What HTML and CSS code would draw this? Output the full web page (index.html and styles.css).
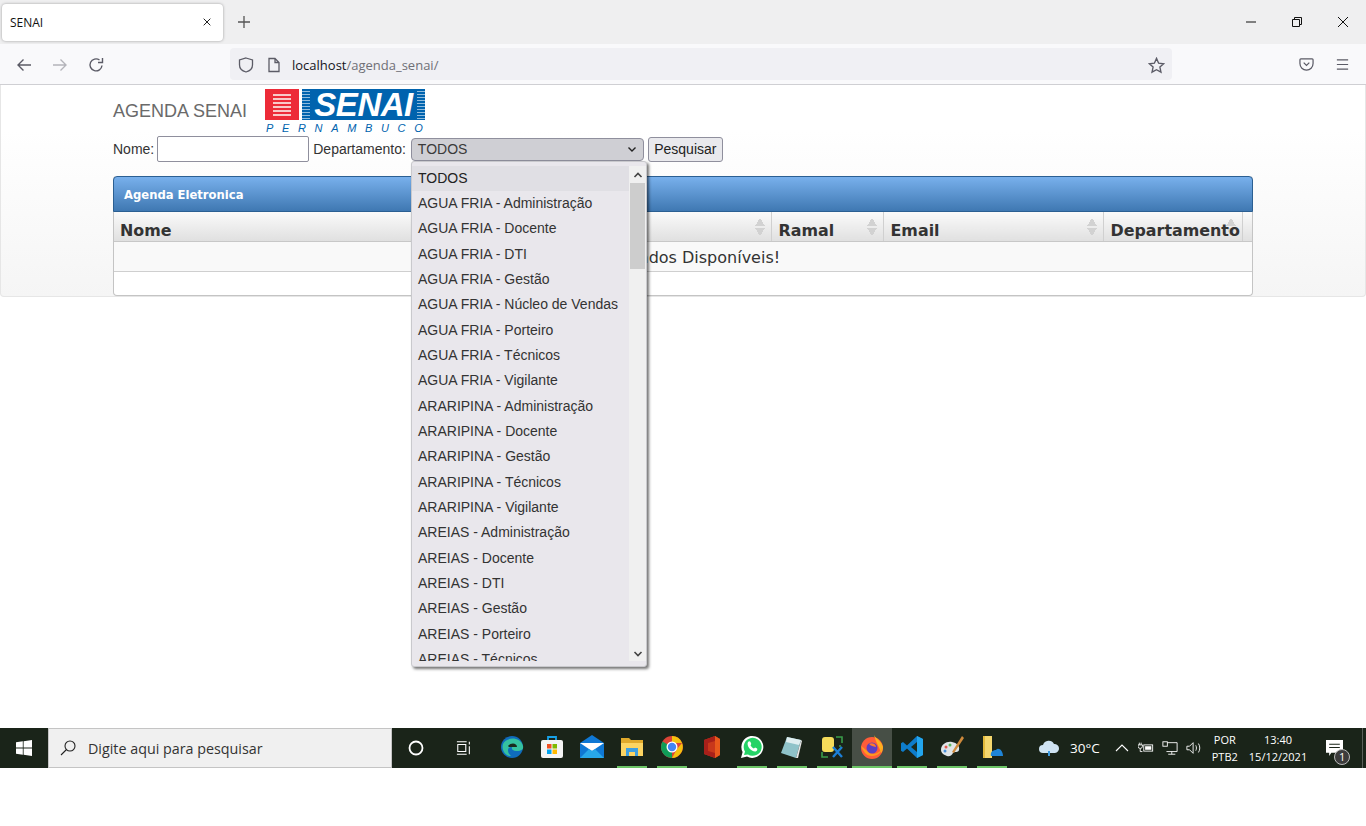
FILE: index.html
```html
<!DOCTYPE html>
<html lang="pt-BR">
<head>
    <meta charset="UTF-8">
    <title>SENAI</title>
    <link rel="stylesheet" href="styles.css">
</head>
<body>
    <!-- tab strip -->
    <div class="tabbar">
        <div class="tab">
            <span class="tab-title">SENAI</span>
            <svg class="icon12" viewBox="0 0 12 12"><path d="M2 2l8 8M10 2l-8 8" stroke="#222" stroke-width="1.2" fill="none"/></svg>
        </div>
        <svg class="newtab" viewBox="0 0 14 14"><path d="M7 1v12M1 7h12" stroke="#555" stroke-width="1.3" fill="none"/></svg>
        <div class="winbtns">
            <svg viewBox="0 0 12 12"><path d="M1 6h10" stroke="#111" stroke-width="1"/></svg>
            <svg viewBox="0 0 12 12"><path d="M1.5 3.5h7v7h-7zM3.5 3.5v-2h7v7h-2" stroke="#111" stroke-width="1" fill="none"/></svg>
            <svg viewBox="0 0 12 12"><path d="M1 1l10 10M11 1L1 11" stroke="#111" stroke-width="1" fill="none"/></svg>
        </div>
    </div>

    <!-- nav bar -->
    <div class="toolbar">
        <div class="navbtns">
            <svg viewBox="0 0 16 16"><path d="M15 8H2M7.5 2.5L2 8l5.5 5.5" stroke="#5b5b66" stroke-width="1.4" fill="none"/></svg>
            <svg viewBox="0 0 16 16"><path d="M1 8h13M8.5 2.5L14 8l-5.5 5.5" stroke="#b4b4ba" stroke-width="1.4" fill="none"/></svg>
            <svg viewBox="0 0 16 16"><path d="M14 8.5A6 6 0 1 1 11.5 3M14.5 1v4.500h-4.500" stroke="#5b5b66" stroke-width="1.400" fill="none"/></svg>
        </div>
        <div class="urlbar">
            <svg class="icon16" viewBox="0 0 16 16"><path d="M8 1l6.500 2v5c0 3.500-3 6-6.500 7-3.500-1-6.500-3.500-6.500-7V3z" stroke="#5b5b66" stroke-width="1.300" fill="none"/></svg>
            <svg class="icon14" viewBox="0 0 14 16"><path d="M2 1.500h6l4 4V14.500H2zM8 1.500v4h4" stroke="#5b5b66" stroke-width="1.300" fill="none"/></svg>
            <span class="url"><span class="url-host">localhost</span>/agenda_senai/</span>
            <svg class="star" viewBox="0 0 16 16"><path d="M8 1.300l2 4.500 4.800.500-3.600 3.200 1 4.800L8 12l-4.200 2.300 1-4.800L1.200 6.300 6 5.800z" stroke="#5b5b66" stroke-width="1.300" fill="none"/></svg>
        </div>
        <div class="toolbtns">
            <svg viewBox="0 0 16 16"><path d="M2 2h12a1 1 0 0 1 1 1v4a7 7 0 0 1-14 0V3a1 1 0 0 1 1-1z" stroke="#5b5b66" stroke-width="1.300" fill="none"/><path d="M5 6l3 3 3-3" stroke="#5b5b66" stroke-width="1.300" fill="none"/></svg>
            <svg viewBox="0 0 16 16"><path d="M2 3h12M2 8h12M2 13h12" stroke="#5b5b66" stroke-width="1.300" fill="none"/></svg>
        </div>
    </div>

    <div class="page">
        <div class="panel">
            <div class="brand">
                <h1 class="brand-title">AGENDA SENAI</h1>
                <div class="logo">
                    <div class="logo-top">
                        <div class="logo-red">
                            <span></span><span></span><span></span><span></span><span></span><span></span>
                        </div>
                        <div class="logo-blue">SENAI</div>
                    </div>
                    <div class="logo-sub">PERNAMBUCO</div>
                </div>
            </div>

            <form class="search">
                <label>Nome:</label>
                <input type="text" class="field">
                <label>Departamento:</label>
                <div class="select">
                    <span>TODOS</span>
                    <svg viewBox="0 0 10 10"><path d="M1.500 3.500L5 7l3.500-3.500" stroke="#222" stroke-width="1.400" fill="none"/></svg>
                </div>
                <button type="button" class="btn">Pesquisar</button>
            </form>

            <div class="grid-box">
                <div class="grid-title">Agenda Eletronica</div>
                <table class="grid">
                    <thead>
                        <tr>
                            <th class="col-nome">Nome<i class="sort"></i></th>
                            <th class="col-ramal">Ramal<i class="sort"></i></th>
                            <th class="col-email">Email<i class="sort"></i></th>
                            <th class="col-depto">Departamento<i class="sort"></i></th>
                            <th></th>
                        </tr>
                    </thead>
                    <tbody>
                        <tr><td colspan="5">Sem Dados Disponíveis!</td></tr>
                    </tbody>
                </table>
                <div class="grid-foot"></div>
            </div>

            <!-- open select list -->
            <div class="dropdown">
                <ul class="options">
                    <li class="active">TODOS</li>
                    <li>AGUA FRIA - Administração</li>
                    <li>AGUA FRIA - Docente</li>
                    <li>AGUA FRIA - DTI</li>
                    <li>AGUA FRIA - Gestão</li>
                    <li>AGUA FRIA - Núcleo de Vendas</li>
                    <li>AGUA FRIA - Porteiro</li>
                    <li>AGUA FRIA - Técnicos</li>
                    <li>AGUA FRIA - Vigilante</li>
                    <li>ARARIPINA - Administração</li>
                    <li>ARARIPINA - Docente</li>
                    <li>ARARIPINA - Gestão</li>
                    <li>ARARIPINA - Técnicos</li>
                    <li>ARARIPINA - Vigilante</li>
                    <li>AREIAS - Administração</li>
                    <li>AREIAS - Docente</li>
                    <li>AREIAS - DTI</li>
                    <li>AREIAS - Gestão</li>
                    <li>AREIAS - Porteiro</li>
                    <li>AREIAS - Técnicos</li>
                </ul>
                <div class="scrollbar">
                    <svg viewBox="0 0 10 6"><path d="M1.500 5L5 1.500 8.500 5" stroke="#444" stroke-width="1.600" fill="none"/></svg>
                    <div class="track"><div class="thumb"></div></div>
                    <svg viewBox="0 0 10 6"><path d="M1.500 1L5 4.500 8.500 1" stroke="#444" stroke-width="1.600" fill="none"/></svg>
                </div>
            </div>
        </div>
    </div>

    <!-- windows taskbar -->
    <div class="taskbar">
        <div class="start">
            <svg viewBox="0 0 16 16"><path d="M0 2.300l6.800-1v6.300H0zM7.600 1.200L16 0v7.600H7.600zM0 8.400h6.800v6.300l-6.800-1zM7.600 8.400H16V16l-8.400-1.200z" fill="#fff"/></svg>
        </div>
        <div class="tb-search">
            <svg viewBox="0 0 16 16"><circle cx="10" cy="6" r="5" stroke="#222" stroke-width="1.100" fill="none"/><path d="M6.500 9.500L1 15" stroke="#222" stroke-width="1.100"/></svg>
            <span>Digite aqui para pesquisar</span>
        </div>
        <div class="tb-sys">
            <svg viewBox="0 0 16 16"><circle cx="8" cy="8" r="6.500" stroke="#fff" stroke-width="1.800" fill="none"/></svg>
            <svg viewBox="0 0 18 16"><path d="M1 1h11M1 15h11M2 4h9v8H2zM15 1v3M15 6v9" stroke="#fff" stroke-width="1.200" fill="none"/></svg>
        </div>
        <div class="apps">
            <div class="app"><svg viewBox="0 0 24 24"><circle cx="12" cy="12" r="11" fill="#0f6cbd"/><path d="M3 9c3-7 17-8 20 2 1 4-3 5-7 5-3 0-5-2-4-4-4-1-6 5-1 9-5 1-10-6-8-12z" fill="#35c1a0"/><path d="M8 11c3-4 9-3 9 1H9z" fill="#1a2a1e"/></svg></div>
            <div class="app"><svg viewBox="0 0 24 24"><path d="M8 5V2h8v3" stroke="#17a2e8" stroke-width="1.800" fill="none"/><rect x="1" y="5" width="22" height="18" rx="2" fill="#f4f4f4"/><rect x="7" y="9" width="4.500" height="4.500" fill="#f25022"/><rect x="12.500" y="9" width="4.500" height="4.500" fill="#7fba00"/><rect x="7" y="14.500" width="4.500" height="4.500" fill="#00a4ef"/><rect x="12.500" y="14.500" width="4.500" height="4.500" fill="#ffb900"/></svg></div>
            <div class="app"><svg viewBox="0 0 24 24"><path d="M0 8L12 0l12 8v15H0z" fill="#0f78d4"/><path d="M0 8h24L12 16z" fill="#fff"/><path d="M0 23l9-9 3 2 3-2 9 9z" fill="#28a8ea"/></svg></div>
            <div class="app running"><svg viewBox="0 0 24 24"><path d="M1 3h8l2 2h12v16H1z" fill="#e0a92b"/><path d="M1 8h22v13H1z" fill="#fcd462"/><path d="M6 21v-8h12v8h-3v-4H9v4z" fill="#3f9fe0"/></svg></div>
            <div class="app running"><svg viewBox="0 0 24 24"><circle cx="12" cy="12" r="11" fill="#db4437"/><path d="M12 12L2.500 6.500A11 11 0 0 0 12 23z" fill="#0f9d58"/><path d="M12 1a11 11 0 0 1 10 7H12zM22 8a11 11 0 0 1-10 15l5-9z" fill="#f4c20d"/><circle cx="12" cy="12" r="5.500" fill="#fff"/><circle cx="12" cy="12" r="4.200" fill="#4285f4"/></svg></div>
            <div class="app"><svg viewBox="0 0 24 24"><path d="M4 5l11-4 5 3v16l-5 3-11-4z" fill="#c8371b"/><path d="M4 5l11-4v5L8 8v8l7 2v5L4 19z" fill="#a8201a"/><path d="M15 1l5 3v16l-5 3z" fill="#e8591c"/></svg></div>
            <div class="app running"><svg viewBox="0 0 24 24"><path d="M1 23l1.600-6A11 11 0 1 1 7 21.500z" fill="#fff"/><path d="M4 20l1-3.500A9 9 0 1 1 8 19.500z" fill="#25d366"/><path d="M8 7c1-1 2-1 2.500 0l.8 2-.8 1.200c.8 1.500 2 2.600 3.400 3.300l1.200-1 2 1c.6 1 0 2.500-1.500 3C11.500 17 6 11 8 7z" fill="#fff"/></svg></div>
            <div class="app running"><svg viewBox="0 0 24 24"><path d="M7 2l14 3-5 18-15-5z" fill="#8fc3c9"/><path d="M7 2l14 3-2 5-13-3z" fill="#dfeef0"/><path d="M16 23l5-18 1 1-4 17z" fill="#e8e8e8"/></svg></div>
            <div class="app running"><svg viewBox="0 0 24 24"><rect x="2" y="2" width="12" height="15" rx="3" fill="#f5dc5a"/><path d="M16 2h6v6M2 17v5h6M20 10v2" stroke="#3a9d4a" stroke-width="1.600" fill="none"/><path d="M13 12l9 10M22 12l-9 10" stroke="#1c7fd6" stroke-width="2.400"/></svg></div>
            <div class="app running current"><svg viewBox="0 0 24 24"><circle cx="12" cy="13" r="11" fill="#ff5c3a"/><path d="M14 0c1 3 7 5 9 12 0 2-1 5-2 6-1-5-5-10-7-18z" fill="#ffb01f"/><path d="M1 11c2 5 5 10 11 10 6 0 10-4 10-8-2 5-8 7-12 5-3-2-5-4-9-7z" fill="#ff9a1f"/><circle cx="12" cy="13" r="5.500" fill="#5b3fc4"/><path d="M9 9c3-2 7 0 7 3-3-1-5-1-7-3z" fill="#ff7a2a"/></svg></div>
            <div class="app running"><svg viewBox="0 0 24 24"><path d="M17 1l6 3v16l-6 3L7 13.500 3 17l-2-1.200v-7.600L3 7l4 3.500z" fill="#0e7ccb"/><path d="M17 7v10l-6-5z" fill="#1a2a1e"/><path d="M17 1l6 3v16l-6 3z" fill="#23a6ee"/></svg></div>
            <div class="app running"><svg viewBox="0 0 24 24"><path d="M1 15c0-6 6-9 11-8 5 1 8 4 7 8-1 3-4 1-6 3-1 2-3 4-6 3-3-1-6-3-6-6z" fill="#dfe5e8"/><circle cx="6" cy="12" r="1.500" fill="#e25a4e"/><circle cx="10" cy="10" r="1.500" fill="#5fb85f"/><circle cx="5" cy="16" r="1.500" fill="#4a90d9"/><path d="M22 1L12 17l2 1L24 3z" fill="#d08a3c"/></svg></div>
            <div class="app running"><svg viewBox="0 0 24 24"><path d="M3 1h9v22H3z" fill="#f5d76e"/><path d="M3 1h2v22H3z" fill="#e2b93b"/><path d="M11 21c-1-4 2-6 5-6 2-3 7 0 7 6z" fill="#1f85d8"/></svg></div>
        </div>
        <div class="tray">
            <svg class="tray-cloud" viewBox="0 0 22 18"><path d="M5 14a4 4 0 0 1 0-8 6 6 0 0 1 11-1 4.500 4.500 0 0 1 1 9z" fill="#cfe3f2"/><path d="M11 12v5" stroke="#3d9be0" stroke-width="2"/></svg>
            <span class="temp">30°C</span>
            <svg class="tray-ico" viewBox="0 0 16 16"><path d="M2 11l6-6 6 6" stroke="#fff" stroke-width="1.100" fill="none"/></svg>
            <svg class="tray-ico" viewBox="0 0 18 16"><path d="M1.500 2v2.500M3.500 2v2.500M0 4.500h5V6a2.500 2.500 0 0 1-5 0zM2.500 8.500V12H5" stroke="#fff" fill="none"/><rect x="6.500" y="4.500" width="10" height="7" stroke="#fff" fill="none"/><rect x="8" y="6" width="7" height="4" fill="#fff"/></svg>
            <svg class="tray-ico" viewBox="0 0 18 16"><path d="M5 2h12v10H5M11 12v3M7 15h8" stroke="#fff" fill="none"/><rect x="1" y="1" width="5" height="5" stroke="#fff" fill="#1a2419"/></svg>
            <svg class="tray-ico" viewBox="0 0 18 16"><path d="M1 6h3l4-4v12l-4-4H1zM11 5c1 2 1 4 0 6M14 3c2 3 2 7 0 10" stroke="#fff" fill="none"/></svg>
            <div class="lang"><span>POR</span><span>PTB2</span></div>
            <div class="clock"><span>13:40</span><span>15/12/2021</span></div>
            <div class="notif">
                <svg viewBox="0 0 16 16"><path d="M0 0h16v12H5l-2 3v-3H0z" fill="#fff"/><path d="M3 4h10M3 7h10" stroke="#1a2419"/></svg>
                <span class="badge">1</span>
            </div>
            <div class="show-desktop"></div>
        </div>
    </div>
</body>
</html>
```

FILE: styles.css
```css
* {
    box-sizing: border-box;
}
html, body {
    margin: 0;
    height: 826px;
    overflow: hidden;
    background: #fff;
}
body {
    font-family: "Liberation Sans", Arial, sans-serif;
    font-size: 14px;
    color: #333;
}
svg {
    display: block;
    flex: none;
}

/* browser chrome */
.tabbar {
    height: 44px;
    background: #efeff0;
    display: flex;
    align-items: center;
    padding-left: 2px;
}
.tab {
    width: 221px;
    height: 37px;
    background: #fff;
    border-radius: 4px;
    box-shadow: 0 0 3px rgba(0,0,0,.35);
    display: flex;
    align-items: center;
    justify-content: space-between;
    padding: 0 11px 0 8px;
}
.tab-title {
    font: 12px "Open Sans", sans-serif;
    color: #111;
}
.icon12 {
    width: 10px;
    height: 10px;
}
.newtab {
    width: 14px;
    height: 14px;
    margin-left: 14px;
}
.winbtns {
    margin-left: auto;
    display: flex;
    gap: 34px;
    padding-right: 17px;
}
.winbtns svg {
    width: 12px;
    height: 12px;
}

.toolbar {
    height: 41px;
    background: #f9f9fb;
    border-bottom: 1px solid #cfcfd3;
    display: flex;
    align-items: center;
    padding: 0 16px;
}
.navbtns {
    display: flex;
    gap: 20px;
    width: 214px;
    margin-top: 2px;
}
.navbtns svg {
    width: 16px;
    height: 16px;
}
.urlbar {
    width: 942px;
    height: 32px;
    background: #f0f0f4;
    border-radius: 4px;
    display: flex;
    align-items: center;
    padding: 2px 7px 0 8px;
}
.icon16 {
    width: 16px;
    height: 16px;
}
.icon14 {
    width: 14px;
    height: 16px;
    margin-left: 13px;
}
.url {
    font: 13px "Open Sans", sans-serif;
    color: #6f6f76;
    margin-left: 11px;
}
.url-host {
    color: #15141a;
}
.star {
    width: 17px;
    height: 17px;
    margin-left: auto;
}
.toolbtns {
    margin-left: auto;
    display: flex;
    gap: 21px;
}
.toolbtns svg {
    width: 15px;
    height: 15px;
}

/* page content */
.page {
    height: 643px;
    background: #fff;
}
.panel {
    position: relative;
    height: 212px;
    border: 1px solid #e6e6e6;
    border-top: 0;
    border-radius: 0 0 4px 4px;
    background: linear-gradient(#fff, #fff 45px, #f5f5f5);
    padding: 4px 112px 0 112px;
}
.brand {
    display: flex;
    height: 47px;
    align-items: flex-start;
}
.brand-title {
    margin: 12px 18px 0 0;
    font-size: 18px;
    font-weight: normal;
    line-height: 20px;
    color: #6a6a6a;
}
.logo {
    width: 160px;
}
.logo-top {
    display: flex;
    justify-content: space-between;
    height: 31px;
}
.logo-red {
    width: 34px;
    background: #ed2b38;
    display: flex;
    flex-direction: column;
    align-items: center;
    justify-content: center;
    gap: 2px;
}
.logo-red span {
    width: 18px;
    height: 2px;
    background: #f9c9c9;
}
.logo-blue {
    width: 123px;
    background:
        linear-gradient(#0063ae, #0063ae) center / 107px 100% no-repeat,
        repeating-linear-gradient(#0063ae, #0063ae 2px, #8fbbdd 2px, #8fbbdd 3px);
    font: italic bold 33px/31px "Liberation Sans", sans-serif;
    color: #fff;
    text-align: center;
    letter-spacing: -.5px;
}
.logo-sub {
    font: italic 11px/13px "Liberation Sans", sans-serif;
    letter-spacing: 8.650px;
    color: #0063ae;
    margin-top: 2px;
    padding-left: 1px;
    white-space: nowrap;
}

.search {
    display: flex;
    align-items: center;
    height: 26px;
    font-size: 14px;
    color: #333;
}
.field {
    width: 152px;
    height: 26px;
    margin: 0 4px 0 3px;
    border: 1px solid #8f8f9d;
    border-radius: 2px;
    background: #fff;
}
.select {
    width: 233px;
    height: 23px;
    margin-left: 5px;
    border: 1px solid #8f8f9d;
    border-radius: 4px;
    background: #cfcfd4;
    display: flex;
    align-items: center;
    justify-content: space-between;
    padding: 0 6px;
    color: #3a3a3a;
}
.select svg {
    width: 10px;
    height: 10px;
}
.btn {
    width: 75px;
    height: 25px;
    margin-left: 4px;
    border: 1px solid #8f8f9d;
    border-radius: 3px;
    background: #e9e9ed;
    font: 14px "Liberation Sans", sans-serif;
    color: #222;
    padding: 0;
}

.grid-box {
    margin-top: 14px;
    border: 1px solid #c4c4c4;
    border-top: 0;
    border-radius: 4px;
    background: #fff;
    height: 120px;
}
.grid-title {
    height: 36px;
    margin: 0 -1px;
    border: 1px solid #2b5f92;
    border-radius: 4px 4px 0 0;
    background: linear-gradient(#78b0ec, #3f78b2);
    font: bold 11.600px/36px "DejaVu Sans", sans-serif;
    color: #fff;
    padding-left: 10px;
}
.grid {
    width: 100%;
    border-collapse: collapse;
    table-layout: fixed;
    font-family: "DejaVu Sans", sans-serif;
}
.grid th {
    position: relative;
    isolation: isolate;
    height: 29px;
    padding: 9px 0 0 7px;
    text-align: left;
    font-size: 15.900px;
    color: #333;
    background: linear-gradient(#fafafa, #e0e0e0);
    border-right: 1px solid #d0d0d0;
    border-bottom: 1px solid #c8c8c8;
    white-space: nowrap;
}
.grid th:last-child {
    border-right: 0;
}
.grid .col-nome {
    width: 657px;
    padding-left: 6px;
}
.col-ramal {
    width: 112px;
}
.col-email {
    width: 220px;
}
.col-depto {
    width: 139px;
}
.grid td {
    height: 30px;
    padding-top: 3px;
    text-align: center;
    font-size: 16px;
    color: #333;
    background: #f9f9f9;
    border-bottom: 1px solid #cfcfcf;
}
.sort {
    position: absolute;
    z-index: -1;
    top: 6px;
    right: 6px;
    width: 10px;
    height: 18px;
    background:
        linear-gradient(to bottom right, transparent 50%, #d2d2d2 50%) left top / 5px 8px no-repeat,
        linear-gradient(to bottom left, transparent 50%, #d2d2d2 50%) right top / 5px 8px no-repeat,
        linear-gradient(to top right, transparent 50%, #d2d2d2 50%) left bottom / 5px 8px no-repeat,
        linear-gradient(to top left, transparent 50%, #d2d2d2 50%) right bottom / 5px 8px no-repeat;
}

.dropdown {
    position: absolute;
    left: 410px;
    top: 76px;
    width: 236px;
    height: 506px;
    background: #e9e7ec;
    border: 1px solid #c9c9cd;
    border-radius: 3px;
    box-shadow: 2px 2px 3px rgba(0,0,0,.55);
    display: flex;
    padding: 3.600px 0 5px;
    overflow: hidden;
}
.options {
    list-style: none;
    margin: 0;
    padding: 0;
    flex: 1;
    min-width: 0;
    overflow: hidden;
}
.options li {
    height: 25.333px;
    line-height: 25px;
    padding-left: 6px;
    white-space: nowrap;
    color: #333;
}
.options .active {
    background: #e0dfe4;
    color: #222;
}
.scrollbar {
    width: 17px;
    background: #f0f0f0;
    display: flex;
    flex-direction: column;
    align-items: center;
    padding: 6px 0 4px;
}
.scrollbar svg {
    width: 10px;
    height: 6px;
}
.track {
    flex: 1;
    width: 100%;
    padding: 5px 1px 0;
}
.thumb {
    height: 86px;
    background: #cdcdcd;
}

/* windows taskbar */
.taskbar {
    height: 40px;
    background: #1a2419;
    display: flex;
    color: #fff;
}
.start {
    width: 48px;
    display: flex;
    align-items: center;
    justify-content: center;
}
.start svg {
    width: 16px;
    height: 16px;
}
.tb-search {
    width: 344px;
    background: #f0f0f0;
    border: 1px solid #c4c4c4;
    display: flex;
    align-items: center;
    padding-left: 11px;
    gap: 12px;
    font: 14.300px "Open Sans", sans-serif;
    color: #333;
}
.tb-search svg {
    width: 16px;
    height: 16px;
}
.tb-sys {
    width: 100px;
    display: flex;
    align-items: center;
    padding-left: 16px;
    gap: 32px;
}
.tb-sys svg {
    width: 16px;
    height: 16px;
}
.apps {
    display: flex;
}
.app {
    width: 40px;
    display: flex;
    align-items: center;
    justify-content: center;
    padding-bottom: 2px;
    position: relative;
}
.app svg {
    width: 24px;
    height: 24px;
}
.running::after {
    content: "";
    position: absolute;
    left: 5px;
    right: 5px;
    bottom: 0;
    height: 2px;
    background: #6cc566;
}
.current {
    background: #474f46;
}
.current::after {
    left: 0;
    right: 0;
}
.tray {
    flex: 1;
    display: flex;
    align-items: center;
    padding-left: 26px;
    font: 11px "Open Sans", sans-serif;
}
.tray-cloud {
    width: 22px;
    height: 18px;
}
.temp {
    font-size: 13.500px;
    margin: 0 14px 0 10px;
}
.tray-ico {
    width: 16px;
    height: 16px;
    margin-right: 8px;
}
.lang, .clock {
    display: flex;
    flex-direction: column;
    align-items: center;
    line-height: 17px;
}
.lang {
    margin-left: 2px;
}
.clock {
    margin-left: 11px;
}
.notif {
    position: relative;
    margin-left: 19px;
    width: 17px;
}
.notif svg {
    width: 17px;
    height: 17px;
}
.badge {
    position: absolute;
    top: 9px;
    left: 8px;
    width: 16px;
    height: 16px;
    border-radius: 50%;
    background: #3c3c3c;
    border: 1px solid #bbb;
    font-size: 11px;
    line-height: 14px;
    text-align: center;
}
.show-desktop {
    margin-left: auto;
    width: 4px;
    height: 100%;
    border-left: 1px solid #5a5f59;
}
```
